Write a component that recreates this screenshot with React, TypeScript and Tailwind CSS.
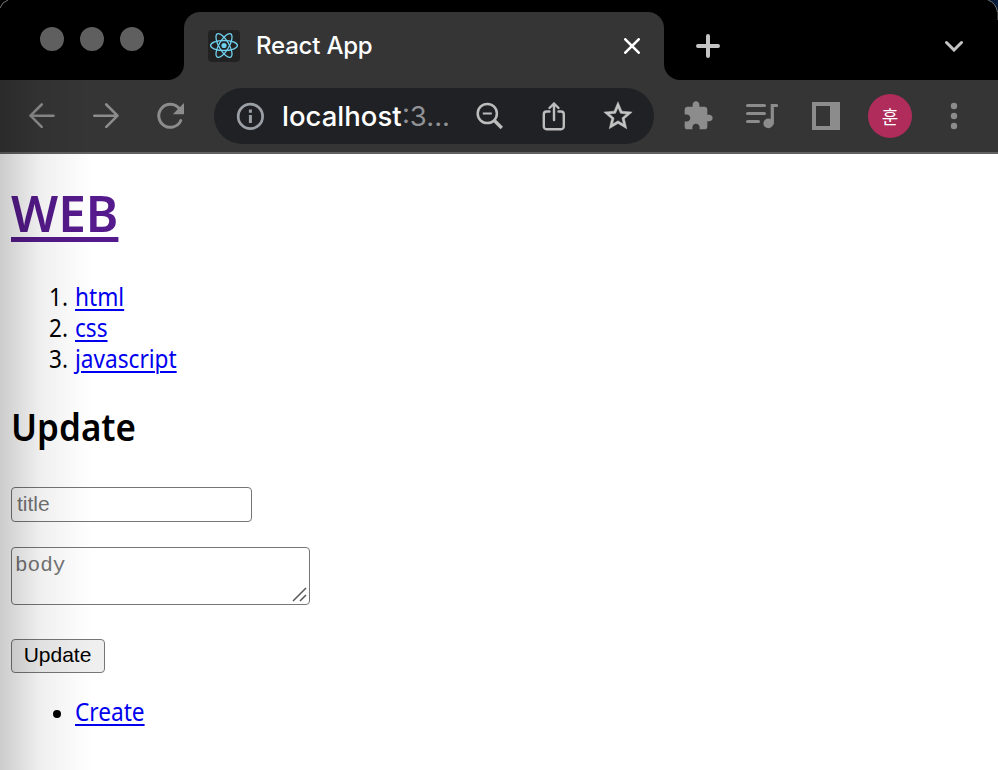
import React from "react";

function ReactLogo() {
  return (
    <svg className="h-8 w-8 shrink-0" viewBox="0 0 32 32" fill="none" stroke="#6fd0ee" strokeWidth="1.3">
      <rect width="32" height="32" rx="4" fill="#222222" stroke="none" />
      <ellipse cx="16" cy="15.5" rx="13.4" ry="5" />
      <ellipse cx="16" cy="15.5" rx="13.4" ry="5" transform="rotate(60 16 15.5)" />
      <ellipse cx="16" cy="15.5" rx="13.4" ry="5" transform="rotate(120 16 15.5)" />
      <circle cx="16" cy="15.5" r="2.6" fill="#6fd0ee" stroke="none" />
    </svg>
  );
}

function Flare({ flip = false }: { flip?: boolean }) {
  return (
    <svg className={flip ? "h-4 w-4 self-end -scale-x-100" : "h-4 w-4 self-end"} viewBox="0 0 16 16">
      <path d="M16 0A16 16 0 0 1 0 16H16Z" fill="#353535" />
    </svg>
  );
}

function TabStrip() {
  return (
    <div className="flex h-20 bg-black">
      <div className="flex w-[168px] gap-4 pt-[27px] pl-10">
        <span className="h-6 w-6 rounded-full bg-[#5f5f5f]" />
        <span className="h-6 w-6 rounded-full bg-[#5f5f5f]" />
        <span className="h-6 w-6 rounded-full bg-[#5f5f5f]" />
      </div>
      <Flare />
      <div className="mt-3 flex w-[480px] items-center rounded-t-2xl bg-[#353535] px-6">
        <ReactLogo />
        <span className="ml-4 text-[24px] font-[450] tracking-[-0.2px] text-white">React App</span>
        <svg className="ml-auto h-4 w-4" viewBox="0 0 16 16" stroke="#fff" strokeWidth="2.6" strokeLinecap="round">
          <path d="M1.3 1.3 14.7 14.7M14.7 1.3 1.3 14.7" />
        </svg>
      </div>
      <Flare flip />
      <svg className="mt-[34px] ml-4 h-6 w-6" viewBox="0 0 24 24" stroke="#c4c4c4" strokeWidth="4" strokeLinecap="round">
        <path d="M2 12H22M12 2V22" />
      </svg>
      <svg className="mt-10 mr-[35px] ml-auto h-3 w-[18px]" viewBox="0 0 18 12" fill="none" stroke="#c4c4c4" strokeWidth="3" strokeLinecap="round">
        <path d="M1.5 2.5 9 10 16.5 2.5" />
      </svg>
    </div>
  );
}

function AddressBar() {
  return (
    <div className="flex h-14 w-[440px] items-center rounded-full bg-[#202124]">
      <svg className="ml-[22px] h-7 w-7" viewBox="0 0 28 28" fill="none" stroke="#9aa0a6" strokeWidth="2.7">
        <circle cx="14.4" cy="14.4" r="12.2" />
        <path d="M14.4 12.9V20.9M14.4 7.5V10.7" strokeWidth="3" />
      </svg>
      <span className="ml-[18px] flex w-[168px] pt-px text-[27.5px] whitespace-nowrap text-[#909295]">
        <span className="w-[120px] font-medium text-white">localhost</span>
        <span>:3...</span>
      </span>
      <svg className="ml-[26px] h-[28px] w-[28px]" viewBox="0 0 28 28" fill="none" stroke="#bdbdbd" strokeWidth="2.5">
        <circle cx="11.3" cy="11.5" r="9.6" />
        <path d="M6.8 11.5H15.8" strokeWidth="2" />
        <path d="M17.8 18 25.8 26" strokeWidth="3.4" />
      </svg>
      <svg className="ml-[38px] h-[30px] w-[24px]" viewBox="0 0 24 30" fill="none" stroke="#bdbdbd" strokeWidth="2.4" strokeLinecap="round" strokeLinejoin="round">
        <path d="M7.5 10.5H4.5A2.7 2.7 0 0 0 1.8 13.2V25.6A2.7 2.7 0 0 0 4.5 28.3H19.1A2.7 2.7 0 0 0 21.8 25.6V13.2A2.7 2.7 0 0 0 19.1 10.5H16.5" />
        <path d="M12 19V2.5M7.5 7 12 2.5 16.5 7" />
      </svg>
      <svg className="ml-[35px] h-[34px] w-[34px]" viewBox="0 0 24 24" fill="#c4c4c4">
        <path
          d="M22 9.24l-7.19-.62L12 2 9.19 8.63 2 9.24l5.46 4.73L5.82 21 12 17.27 18.18 21l-1.63-7.03L22 9.24zM12 15.4l-3.76 2.27 1-4.28-3.32-2.88 4.38-.38L12 6.1l1.71 4.04 4.38.38-3.32 2.88 1 4.28L12 15.4z"
          stroke="#c4c4c4"
          strokeWidth="0.35"
        />
      </svg>
    </div>
  );
}

function Toolbar() {
  return (
    <div className="flex h-[74px] items-center border-b-2 border-[#616161] bg-[#353535]">
      <svg className="ml-7 h-[26px] w-7 shrink-0" viewBox="0 0 28 26" fill="none" stroke="#8c8c8c" strokeWidth="2.6" strokeLinecap="round" strokeLinejoin="round">
        <path d="M25.5 12.7H2.5M13.7 1.5 2.5 12.7 13.7 23.9" />
      </svg>
      <svg className="ml-9 h-[26px] w-7 shrink-0" viewBox="0 0 28 26" fill="none" stroke="#8c8c8c" strokeWidth="2.6" strokeLinecap="round" strokeLinejoin="round">
        <path d="M2.3 12.7H25.5M14.3 1.5 25.5 12.7 14.3 23.9" />
      </svg>
      <svg className="ml-[36px] h-7 w-7 shrink-0" viewBox="0 0 28 28" fill="none" stroke="#8c8c8c" strokeWidth="3">
        <path d="M23.4 6.8A11.5 11.5 0 1 0 24.8 18.5" strokeLinecap="round" />
        <path d="M28 1V12.2H16.8Z" fill="#8c8c8c" stroke="none" />
      </svg>
      <div className="ml-[30px] shrink-0">
        <AddressBar />
      </div>
      <svg className="ml-7 h-8 w-8 shrink-0" viewBox="0 0 24 24" fill="#8c8c8c">
        <path d="M20.5 11H19V7c0-1.1-.9-2-2-2h-4V3.5C13 2.12 11.88 1 10.5 1S8 2.12 8 3.5V5H4c-1.1 0-1.99.9-1.99 2v3.8H3.5c1.49 0 2.7 1.21 2.7 2.7s-1.21 2.7-2.7 2.7H2V20c0 1.1.9 2 2 2h3.8v-1.5c0-1.49 1.21-2.7 2.7-2.7 1.49 0 2.7 1.21 2.7 2.7V22H17c1.1 0 2-.9 2-2v-4h1.5c1.38 0 2.5-1.12 2.5-2.5S21.88 11 20.5 11z" />
      </svg>
      <svg className="ml-8 h-7 w-8 shrink-0" viewBox="0 0 32 28" fill="none" stroke="#8c8c8c" strokeWidth="3" strokeLinecap="round">
        <path d="M1.5 3.5H18.5M1.5 11.5H18.5M1.5 19.5H12.5" />
        <path d="M26.3 21.5V3.5H30.5" strokeWidth="3.2" />
        <circle cx="22.3" cy="21.4" r="4.9" fill="#8c8c8c" stroke="none" />
      </svg>
      <svg className="ml-[34px] h-7 w-7 shrink-0" viewBox="0 0 28 28" fill="#8c8c8c" fillRule="evenodd">
        <path d="M0 0H28V28H0ZM4 4V24H18V4Z" />
      </svg>
      <span className="ml-7 flex h-11 w-11 shrink-0 items-center justify-center rounded-full bg-[#b02c5b] font-['Noto_Sans_CJK_KR',sans-serif] text-[18px] text-white">
        훈
      </span>
      <svg className="ml-[38px] h-7 w-2 shrink-0" viewBox="0 0 8 28" fill="#8c8c8c">
        <circle cx="4" cy="4" r="3.2" />
        <circle cx="4" cy="14" r="3.2" />
        <circle cx="4" cy="24" r="3.2" />
      </svg>
    </div>
  );
}

const topics = ["html", "css", "javascript"];

const link =
  "inline-block origin-left scale-x-[0.905] text-[#0000ee] underline decoration-2 underline-offset-[3px]";

export default function App() {
  return (
    <div className="relative h-[770px] w-[998px] overflow-hidden bg-white font-['Inter',sans-serif]">
      <TabStrip />
      <Toolbar />
      <main className="flex flex-col items-start pl-[11px] font-['Noto_Sans','Open_Sans',sans-serif] text-[25px] leading-[31px] text-black">
        <h1 className="mt-[28px] text-[50px] leading-[62px] font-semibold">
          <a className="inline-block origin-left scale-x-[0.99] text-[#551a8b] underline decoration-[5px] underline-offset-[5px]">WEB</a>
        </h1>
        <ol className="mt-[37px]">
          {topics.map((topic, i) => (
            <li key={topic} className="flex">
              <span className="w-[57px] origin-right scale-x-90 text-right">{i + 1}.</span>
              <a className={`ml-[7px] ${link}`}>{topic}</a>
            </li>
          ))}
        </ol>
        <h2 className="mt-[28px] origin-left scale-x-[0.92] text-[38px] leading-[48px] font-semibold">Update</h2>
        <input
          placeholder="title"
          className="mt-[37px] h-[35px] w-[241px] rounded-[4px] border border-[#767676] bg-white px-[5px] pb-[1px] font-['Liberation_Sans',sans-serif] text-[21px] placeholder:text-[#757575]"
        />
        <div className="relative mt-[25px] h-[58px] w-[299px]">
          <textarea
            placeholder="body"
            className="block h-full w-full resize-none overflow-hidden rounded-[4px] border border-[#767676] bg-white px-[3px] pt-[6px] font-['Liberation_Mono',monospace] text-[21px] leading-[24px] placeholder:text-[#757575]"
          />
          <svg className="absolute right-[3px] bottom-[3px] h-[15px] w-[15px]" viewBox="0 0 15 15" stroke="#555" strokeWidth="1.5">
            <path d="M1 14 14 1M8 14 14 8" />
          </svg>
        </div>
        <button className="mt-[34px] flex h-[34px] w-[94px] items-center justify-center rounded-[4px] border border-[#767676] bg-[#efefef] pr-[1px] pb-[3px] font-['Liberation_Sans',sans-serif] text-[21px]">
          Update
        </button>
        <div className="mt-[23px] flex">
          <span className="mt-[14px] ml-[42px] h-2 w-2 rounded-full bg-black" />
          <a className={`ml-[14px] ${link}`}>Create</a>
        </div>
      </main>
      <div className="pointer-events-none absolute top-20 bottom-0 left-0 w-[92px] bg-linear-to-r from-black/20 via-black/6 via-45% to-transparent" />
      <svg className="absolute top-0 right-0 h-5 w-5" viewBox="0 0 20 20" fill="none">
        <path d="M11 0Q18 3 19.5 11H20V0Z" fill="#071b3b" />
        <path d="M10 0Q18 3 19.5 12" stroke="#777" />
        <path d="M19.5 12V20" stroke="#333" />
      </svg>
      <svg className="absolute top-0 left-0 h-3 w-3" viewBox="0 0 12 12" fill="none">
        <path d="M0 8Q2 2 8 0" stroke="#777" />
      </svg>
    </div>
  );
}
